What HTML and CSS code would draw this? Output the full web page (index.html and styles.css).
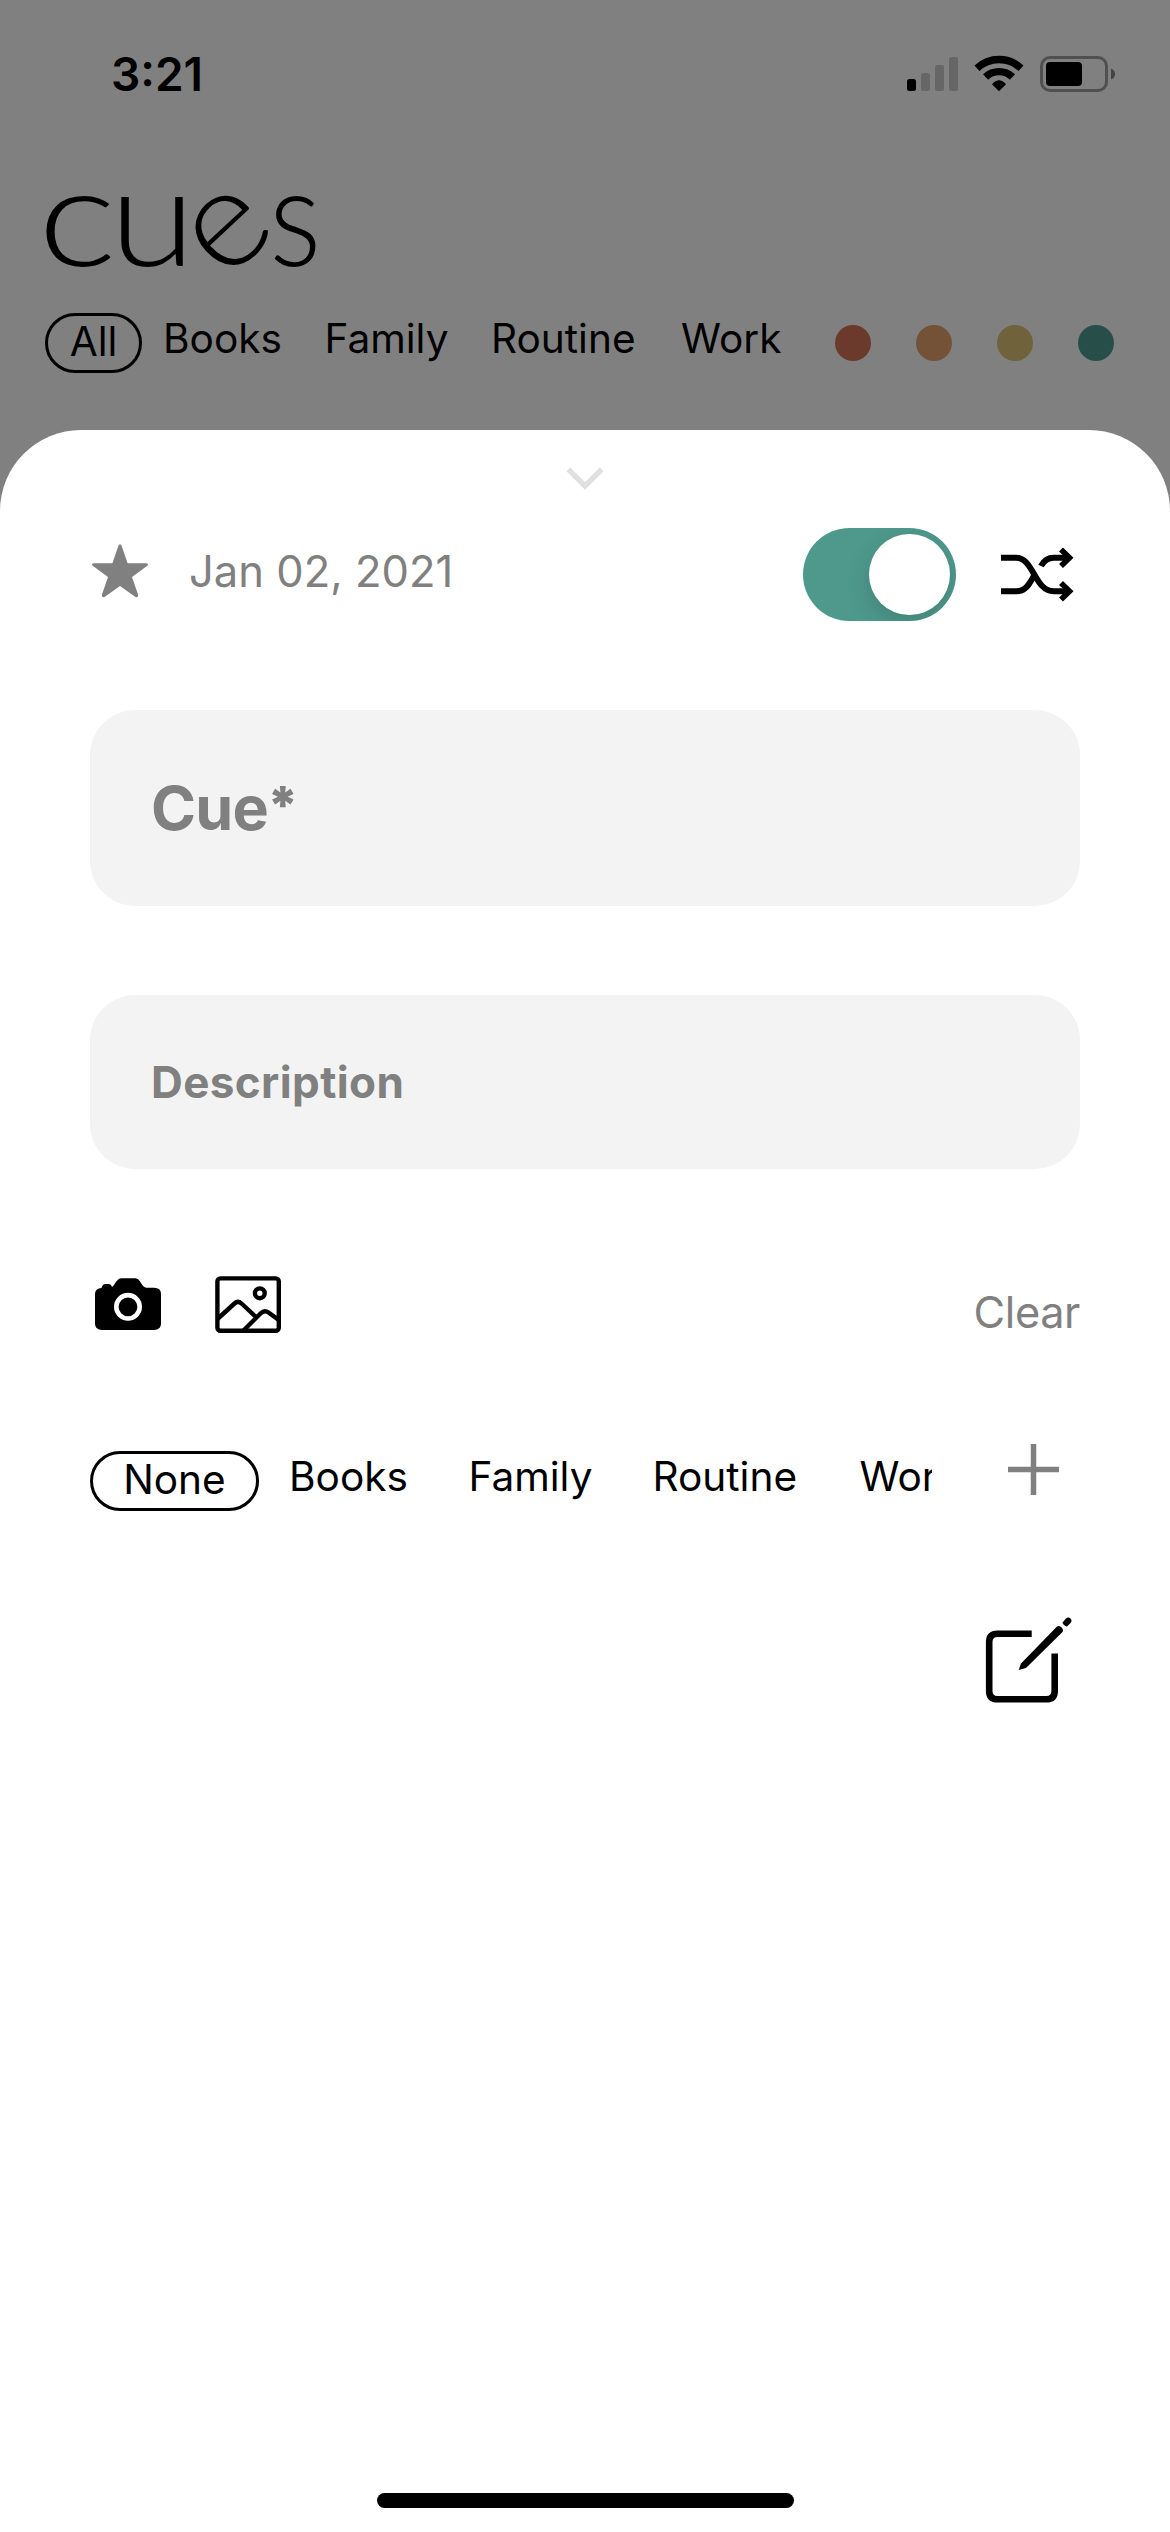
FILE: index.html
```html
<!DOCTYPE html>
<html lang="en">
<head>
<meta charset="utf-8">
<title>cues</title>
<link rel="stylesheet" href="styles.css">
</head>
<body>
<div class="screen">
  <header class="backdrop">
    <div class="status">
      <span class="time">3:21</span>
      <svg class="status-icons" width="212" height="44" viewBox="904 52 212 44">
        <rect x="907" y="79" width="9" height="12" rx="2.5"/>
        <g fill="#666"><rect x="921" y="73" width="9" height="18" rx="2.5"/><rect x="935" y="65" width="9" height="26" rx="2.5"/><rect x="949" y="57" width="9" height="34" rx="2.5"/></g>
        <g fill="none" stroke="#000" stroke-width="7.4">
          <path d="M977 68.200A32 32 0 0 1 1021 68.200"/>
          <path d="M985.600 77A19.500 19.500 0 0 1 1012.400 77"/>
        </g>
        <path d="M992 84.300Q999 76.300 1006 84.300L999 91.200Z"/>
        <rect x="1041.500" y="57.500" width="65" height="33" rx="8.500" fill="none" stroke="#505050" stroke-width="3"/>
        <rect x="1046" y="62" width="36" height="24" rx="4"/>
        <path d="M1111 68.500Q1115 70 1115 74T1111 79.500Z" fill="#444"/>
      </svg>
    </div>
    <h1 class="logo"><span class="l-c">c</span><span class="l-u">u</span><span class="l-e">e</span><span class="l-s">s</span></h1>
    <nav class="filters">
      <span class="chip selected">All</span>
      <span class="chip">Books</span>
      <span class="chip">Family</span>
      <span class="chip">Routine</span>
      <span class="chip">Work</span>
      <i class="dot red"></i><i class="dot orange"></i><i class="dot yellow"></i><i class="dot green"></i>
    </nav>
  </header>
  <main class="sheet">
    <svg class="chevron" width="40" height="26" viewBox="0 0 40 26"><path d="M3.300 3.300L20 20L36.700 3.300" fill="none" stroke="#e0e0e0" stroke-width="5.400"/></svg>
    <div class="meta">
      <svg class="star" width="56" height="54" viewBox="92 544 56 54"><path d="M118.500 545.500Q120 543 121.500 545.500L127.600 563.300H146.500Q149 563.800 147.300 565.800L132 577L138.200 595Q138 598 135.500 597L120 586L104.500 597Q102 598 101.800 595L108 577L92.700 565.800Q91 563.800 93.500 563.300H112.400Z" fill="#808080"/></svg>
      <span class="date">Jan 02, 2021</span>
      <div class="toggle"><i class="knob"></i></div>
      <svg class="shuffle" width="74" height="58" viewBox="1000 544 74 58"><g fill="none" stroke="#000" stroke-width="6"><path d="M1001 556.700H1016C1034 556.700 1034 590.300 1054 590.300H1068"/><path d="M1001 590.300H1016C1027 590.300 1030 581 1035 573"/><path d="M1041 565C1044 559 1049 556.700 1054 556.700H1068"/><path d="M1061 548.500L1069.500 556.700L1061 565M1061 582L1069.500 590.300L1061 598.500" stroke-width="5.600"/></g></svg>
    </div>
    <div class="field cue">Cue<span class="required">*</span></div>
    <div class="field description">Description</div>
    <div class="media">
      <svg width="66" height="52" viewBox="95.500 1278 66 52"><path d="M102 1288Q103 1284 106 1284H109Q111.500 1284 112.500 1287C115 1286 117 1278.300 122 1278.300H136C141 1278.300 142 1287.800 147 1287.800H154.500Q161.500 1287.800 161.500 1294V1323.500Q161.500 1330 154.500 1330H102.500Q95.500 1330 95.500 1323.500V1294Q95.500 1288.500 102 1288Z"/><circle cx="128.500" cy="1306.800" r="11.700" fill="none" stroke="#fff" stroke-width="4.600"/></svg>
      <svg class="picture" width="66" height="57" viewBox="215.500 1275.500 66 57"><g fill="none" stroke="#000" stroke-width="4.400"><rect x="217.900" y="1277.900" width="61.400" height="52.400" rx="3"/><circle cx="260.300" cy="1292.800" r="4.900"/><path d="M218 1318.500L235 1303Q238.500 1299.800 242 1303L257 1317M244 1330L261 1313Q265 1309 269 1312L280 1320"/></g></svg>
      <span class="clear">Clear</span>
    </div>
    <div class="tags">
      <div class="tag-list">
        <span class="chip selected">None</span>
        <span class="chip">Books</span>
        <span class="chip">Family</span>
        <span class="chip">Routine</span>
        <span class="chip">Work</span>
      </div>
      <svg class="plus" width="51" height="51" viewBox="0 0 51 51"><path d="M0 25.500H51M25.500 0V51" stroke="#808080" stroke-width="5.500"/></svg>
    </div>
    <svg class="compose" width="88" height="88" viewBox="985 1616 88 88"><path d="M1031.700 1633.700H997.500Q989.200 1633.700 989.200 1642V1691Q989.200 1699.300 997.500 1699.300H1046.500Q1054.700 1699.300 1054.700 1691V1653.500" fill="none" stroke="#000" stroke-width="6.600"/><path d="M1018.700 1670L1021 1663.500L1056.500 1627Q1058.500 1625 1061 1627L1062 1628Q1064 1630.500 1062 1632.500L1026 1668Z"/><path d="M1062.500 1622.500L1066 1618.500C1069 1615.500 1073.500 1620 1070.500 1623L1067 1626.500C1065.500 1626.500 1062.500 1624 1062.500 1622.500Z"/></svg>
    <div class="home-bar"></div>
  </main>
</div>
</body>
</html>
```
FILE: styles.css
```css
* { box-sizing: border-box; }
body { margin: 0; background: #808080; font-family: Inter, "Liberation Sans", sans-serif; color: #000; }
svg { display: block; flex: none; }
.screen { width: 1170px; height: 2532px; display: flex; flex-direction: column; overflow: hidden; }

.backdrop { height: 430.300px; flex: none; }
.status { height: 131px; padding: 52px 54px 0 111px; display: flex; justify-content: space-between; }
.time { font-size: 46px; font-weight: 600; line-height: 44px; }
.logo { margin: 0; padding-left: 41px; height: 163px; display: flex; font: 300 139px/163px Lato, sans-serif; }
.logo span { display: block; flex: none; text-align: center; transform-origin: 50% 61.600%; }
.l-c { width: 72px; transform: scaleX(1.200); }
.l-u { width: 79px; transform: scaleX(1.130); }
.l-e { width: 74px; transform: rotate(-43deg) scaleX(1.040); }
.l-s { width: 53px; transform: scaleX(.880); }

.filters { margin-top: 19px; display: grid; grid-template-columns: 97px 161.500px 166.500px 190px 175px repeat(4, 81px); padding-left: 45px; }
.chip { font-size: 40.600px; line-height: 51px; height: 60px; white-space: nowrap; }
.filters .chip:not(.selected) { padding-left: 21px; }
.chip.selected { border: 3px solid #000; border-radius: 30px; text-align: center; line-height: 52px; }
.dot { width: 36px; height: 36px; border-radius: 50%; align-self: center; }
.red { background: #6b3a2c; }
.orange { background: #735237; }
.yellow { background: #70623b; }
.green { background: #284e49; }

.sheet { flex: 1; background: #fff; border-radius: 81px 81px 0 0; padding: 36px 90px 0; display: flex; flex-direction: column; }
.chevron { align-self: center; }
.meta { height: 94px; margin-top: 35px; display: flex; align-items: center; }
.star { margin-left: 2px; margin-top: -7px; }
.date { margin-left: 41px; margin-top: -6px; font-size: 43.500px; color: #808080; }
.toggle { margin-left: auto; width: 153px; height: 93px; border-radius: 47px; background: #4e998c; padding: 6px; display: flex; justify-content: flex-end; overflow: hidden; }
.knob { width: 81px; height: 81px; border-radius: 50%; background: #fff; box-shadow: 0 9px 24px rgba(0, 0, 0, .15); }
.shuffle { margin: 0 6px 0 44px; }
.field { border-radius: 45px; background: #f3f3f3; color: #808080; font-weight: 700; padding-left: 61px; flex: none; }
.cue { margin-top: 89px; height: 196px; font-size: 61px; line-height: 196px; letter-spacing: -.800px; }
.required { font-size: 52px; font-weight: 900; line-height: 1; letter-spacing: 0; vertical-align: 6px; margin-left: -1px; }
.description { margin-top: 89px; height: 174px; font-size: 44px; line-height: 175px; letter-spacing: .400px; }
.media { height: 58px; margin-top: 106px; padding-left: 5px; display: flex; align-items: center; }
.picture { margin-left: 54px; }
.clear { margin-left: auto; margin-top: 16px; font-size: 43.300px; letter-spacing: -.400px; color: #808080; }
.tags { margin-top: 111px; height: 68px; display: flex; align-items: flex-start; }
.tag-list { width: 842px; margin-top: 7px; display: grid; grid-template-columns: 169px 179.500px 184px 207px 102.500px; overflow: hidden; flex: none; }
.tag-list .chip:not(.selected) { padding-left: 30px; }
.plus { margin-left: 76px; }
.compose { align-self: flex-end; margin: 104px 7px 0 0; }
.home-bar { width: 417px; height: 15px; border-radius: 8px; background: #000; margin: auto auto 24px; }
```
